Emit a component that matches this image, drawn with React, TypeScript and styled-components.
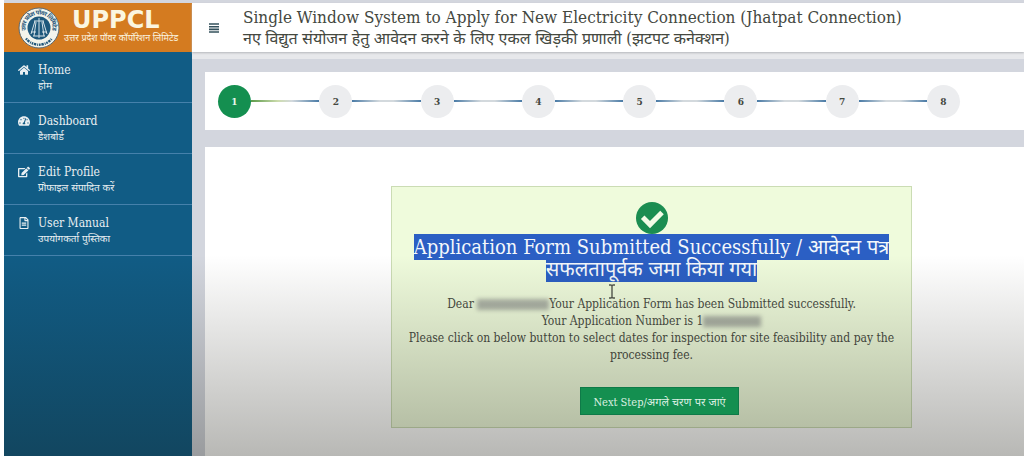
import React from "react";
import styled, { createGlobalStyle, css } from "styled-components";
import { FaHome, FaTachometerAlt, FaEdit, FaRegFileAlt } from "react-icons/fa";

const GlobalStyle = createGlobalStyle`
  * { box-sizing: border-box; }
  body {
    margin: 0;
    background: #d3d6de;
    color: #44483f;
    font-family: "Roboto Slab", "DejaVu Serif Condensed", "DejaVu Serif", "Noto Sans", serif;
  }
  h1, h2, p, ul, ol { margin: 0; padding: 0; font-weight: 400; }
  ul, ol { list-style: none; }
`;

const Page = styled.div`
  position: relative;
  display: flex;
  min-height: 100vh;
  padding-top: 3px;
  border-left: 4px solid #fff;
  &::after {
    content: "";
    position: absolute;
    inset: 56% 0 0 0;
    background: linear-gradient(rgba(20, 20, 10, 0), rgba(20, 20, 10, 0.3));
    pointer-events: none;
  }
`;

const Sidebar = styled.aside`
  flex: 0 0 188px;
  background: #115c85;
`;

const Brand = styled.a`
  display: flex;
  align-items: center;
  gap: 4px;
  height: 49px;
  padding-left: 14px;
  background: #d47b20;
  color: #fbf6e0;
  text-decoration: none;
`;

const BrandText = styled.span`
  display: flex;
  flex-direction: column;
`;

const BrandName = styled.span`
  padding-left: 8px;
  font: 700 24px/20px "DejaVu Sans", sans-serif;
`;

const BrandTagline = styled.span`
  font-size: 9px;
  line-height: 16px;
  white-space: nowrap;
`;

const NavLink = styled.a`
  display: flex;
  gap: 8px;
  height: 51px;
  padding: 10px 0 0 14px;
  border-bottom: 1px solid #4681ab;
  color: #e9eff2;
  font-size: 12px;
  line-height: 16px;
  text-decoration: none;
  svg { flex: 0 0 12px; margin-top: 2px; }
`;

const NavHindi = styled.span`
  display: block;
  font-size: 10px;
  line-height: 16px;
`;

const Main = styled.div`
  flex: 1;
  min-width: 0;
  display: flex;
  flex-direction: column;
`;

const Header = styled.header`
  display: flex;
  align-items: center;
  gap: 24px;
  height: 49px;
  padding-left: 17px;
  background: #fff;
  box-shadow: 0 1px 2px #b4b6ba, 0 7px 0 #e7e8eb;
`;

const MenuButton = styled.button`
  display: flex;
  padding: 0;
  border: 0;
  background: none;
  color: #34515c;
`;

const Title = styled.h1`
  font-size: 17px;
  line-height: 21px;
  white-space: nowrap;
`;

const TitleHindi = styled.span`
  display: block;
  font-size: 16px;
`;

const Content = styled.main`
  flex: 1;
  display: flex;
  flex-direction: column;
  gap: 17px;
  padding: 20px 0 0 13px;
`;

const Steps = styled.ol`
  display: flex;
  align-items: center;
  height: 58px;
  padding: 0 64px 0 13px;
  background: #fff;
`;

const Step = styled.li<{ $first?: boolean }>`
  display: flex;
  align-items: center;
  flex: ${(p) => (p.$first ? "none" : 1)};
  &::before {
    content: "";
    display: ${(p) => (p.$first ? "none" : "block")};
    flex: 1;
    height: 2px;
    background: linear-gradient(90deg, #4a7ba6, #d3d9dd 40%, #d3d9dd 60%, #4a7ba6);
  }
  &:nth-child(2)::before {
    background: linear-gradient(90deg, #5c9a4a, #cddcae 40%, #d3d9dd 60%, #4a7ba6);
  }
`;

const StepNumber = styled.span<{ $active?: boolean }>`
  display: grid;
  place-items: center;
  width: 33px;
  height: 33px;
  border-radius: 50%;
  background: #ecedef;
  font-size: 10px;
  font-weight: 700;
  ${(p) => p.$active && css`background: #148f50; color: #e8f6ec;`}
`;

const Panel = styled.section`
  flex: 1;
  padding: 39px 112px 28px 186px;
  background: #fff;
`;

const Notice = styled.div`
  position: relative;
  display: flex;
  flex-direction: column;
  align-items: center;
  padding: 15px 16px 12px;
  border: 1px solid #cbdcb4;
  background: #effbdc;
  text-align: center;
  color: #484b43;
`;

const NoticeTitle = styled.h2`
  margin-top: 2px;
  font-size: 20px;
  line-height: 22px;
  color: #f4f8fb;
`;

const Highlight = styled.span`
  padding: 1px 0;
  background: #2b5fc4;
`;

const NoticeText = styled.p`
  margin-top: 16px;
  font-size: 12px;
  line-height: 17px;
`;

const Redacted = styled.span<{ $wide?: boolean }>`
  display: inline-block;
  width: ${(p) => (p.$wide ? "72px" : "58px")};
  height: 11px;
  vertical-align: middle;
  background: #adb3a6;
  filter: blur(2px);
`;

const NextButton = styled.button`
  position: relative;
  z-index: 1;
  height: 28px;
  margin: 23px 0 0 16px;
  padding: 0 12px;
  border: 1px solid #0f7a48;
  background: #148f50;
  color: #dcefe2;
  font-family: inherit;
  font-size: 11px;
  white-space: nowrap;
`;

const Pointer = styled.svg`
  position: absolute;
  top: 97px;
  left: 216px;
`;

const Emblem = () => (
  <svg width="42" height="42" viewBox="0 0 42 42" aria-hidden="true">
    <defs>
      <path id="ring" d="M6.6 29A16.5 16.5 0 1 1 35.4 29" />
    </defs>
    <circle cx="21" cy="21" r="20" fill="#f3f4ec" stroke="#5d6a70" strokeWidth="1" />
    <text fontFamily="Noto Sans, sans-serif" fontSize="6" fontWeight="700" fill="#1f567a" dy="3">
      <textPath href="#ring" startOffset="50%" textAnchor="middle">उत्तर प्रदेश पॉवर लिमिटेड</textPath>
    </text>
    <path d="M8 31.5A16.7 16.7 0 0 0 34 31.5" fill="none" stroke="#1f567a" strokeWidth="2.4" strokeDasharray="1.6 .7 2.4 .9 1 .8" />
    <circle cx="21" cy="21" r="11.5" fill="#1d587c" />
    <path d="M21 11v20M16 14h10M17 14l-4 13M25 14l4 13M18 15l-2 14M24 15l2 14M13 25h5M24 25h5M15 29h12" fill="none" stroke="#d5e2e8" strokeWidth="1" />
  </svg>
);

const MenuIcon = () => (
  <svg width="10" height="10" viewBox="0 0 10 10" aria-hidden="true">
    <path d="M0 1h10M0 3.7h10M0 6.4h10M0 9h10" stroke="currentColor" strokeWidth="1.6" />
  </svg>
);

const SuccessIcon = () => (
  <svg width="32" height="32" viewBox="0 0 32 32" aria-hidden="true">
    <circle cx="16" cy="16" r="16" fill="#1b8d51" />
    <path d="M6.7 15.3L14 22.6L26 10.6" fill="none" stroke="#f3fbe6" strokeWidth="5" strokeLinejoin="miter" />
  </svg>
);

const navItems = [
  { en: "Home", hi: "होम", Icon: FaHome },
  { en: "Dashboard", hi: "डैशबोर्ड", Icon: FaTachometerAlt },
  { en: "Edit Profile", hi: "प्रोफाइल संपादित करें", Icon: FaEdit },
  { en: "User Manual", hi: "उपयोगकर्ता पुस्तिका", Icon: FaRegFileAlt },
];

export default function App() {
  return (
    <Page>
      <GlobalStyle />
      <Sidebar>
        <Brand href="#">
          <Emblem />
          <BrandText>
            <BrandName>UPPCL</BrandName>
            <BrandTagline>उत्तर प्रदेश पॉवर कॉर्पोरेशन लिमिटेड</BrandTagline>
          </BrandText>
        </Brand>
        <nav>
          <ul>
            {navItems.map(({ en, hi, Icon }) => (
              <li key={en}>
                <NavLink href="#">
                  <Icon size={12} />
                  <span>
                    {en}
                    <NavHindi>{hi}</NavHindi>
                  </span>
                </NavLink>
              </li>
            ))}
          </ul>
        </nav>
      </Sidebar>
      <Main>
        <Header>
          <MenuButton aria-label="Toggle menu">
            <MenuIcon />
          </MenuButton>
          <Title>
            Single Window System to Apply for New Electricity Connection (Jhatpat Connection)
            <TitleHindi>नए विद्युत संयोजन हेतु आवेदन करने के लिए एकल खिड़की प्रणाली (झटपट कनेक्शन)</TitleHindi>
          </Title>
        </Header>
        <Content>
          <Steps>
            {[1, 2, 3, 4, 5, 6, 7, 8].map((n) => (
              <Step key={n} $first={n === 1}>
                <StepNumber $active={n === 1}>{n}</StepNumber>
              </Step>
            ))}
          </Steps>
          <Panel>
            <Notice>
              <SuccessIcon />
              <NoticeTitle>
                <Highlight>Application Form Submitted Successfully / आवेदन पत्र सफलतापूर्वक जमा किया गया</Highlight>
              </NoticeTitle>
              <NoticeText>
                Dear <Redacted $wide />Your Application Form has been Submitted successfully.
                <br />
                Your Application Number is 1<Redacted />
                <br />
                Please click on below button to select dates for inspection for site feasibility and pay the processing fee.
              </NoticeText>
              <NextButton>Next Step/अगले चरण पर जाएं</NextButton>
              <Pointer width="8" height="15" viewBox="0 0 8 15" aria-hidden="true">
                <path d="M1 1h2l1 1 1-1h2M4 2v11M1 14h2l1-1 1 1h2" fill="none" stroke="#55594f" strokeWidth="1.4" />
              </Pointer>
            </Notice>
          </Panel>
        </Content>
      </Main>
    </Page>
  );
}
